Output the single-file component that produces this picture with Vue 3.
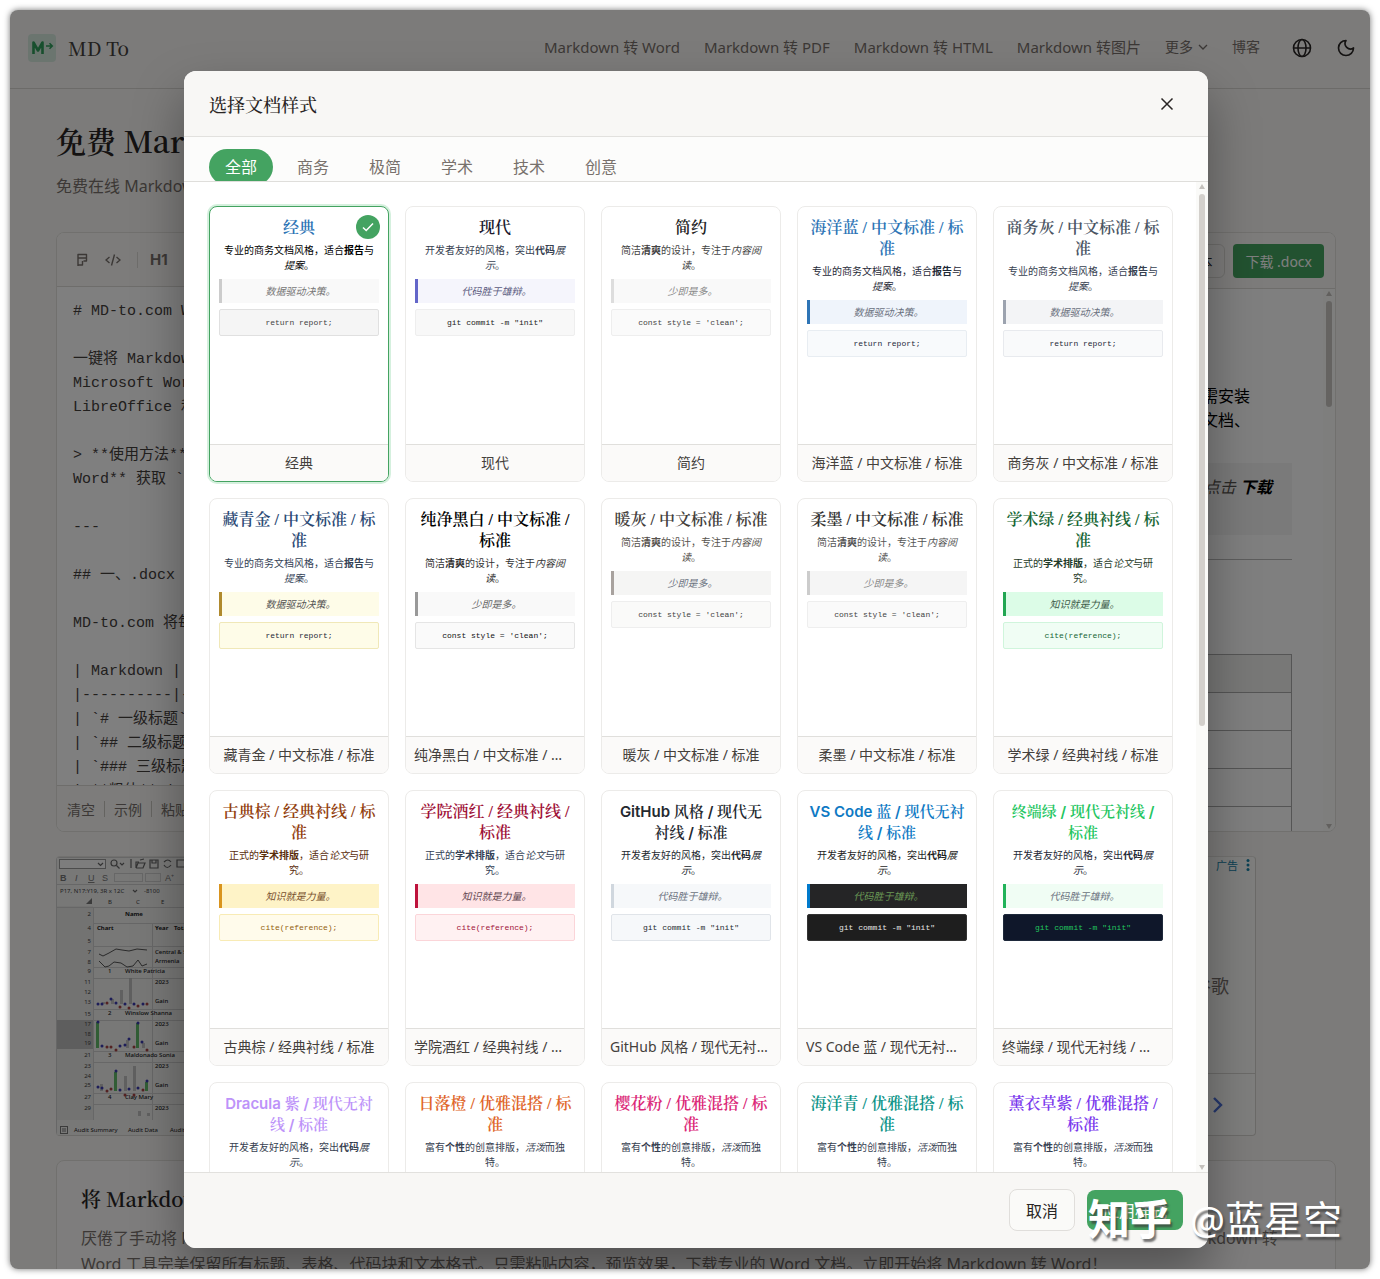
<script setup>
import { ref } from 'vue'

const navLinks = ['Markdown 转 Word', 'Markdown 转 PDF', 'Markdown 转 HTML', 'Markdown 转图片']
const tabs = ['全部', '商务', '极简', '学术', '技术', '创意']
const activeTab = ref('全部')
const selected = ref('经典')

const markdown = ref(`# MD-to.com Word

一键将 Markdown 转换为
Microsoft Word、WPS 和
LibreOffice 和更多

> **使用方法**：点击下载
Word** 获取 \`.docx\`

---

## 一、.docx 转换

MD-to.com 将每个元素

| Markdown | Word |
|----------|------|
| \`# 一级标题\` | H1 |
| \`## 二级标题\` | H2 |
| \`### 三级标题\` | H3 |
| **粗体** | 粗体 |`)

const samples = {
  biz: { desc: [['专业的商务文档风格，适合'], ['报告', 'b'], ['与'], ['提案', 'i'], ['。']], quote: '数据驱动决策。', code: 'return report;' },
  dev: { desc: [['开发者友好的风格，突出'], ['代码', 'b'], ['展示', 'i'], ['。']], quote: '代码胜于雄辩。', code: 'git commit -m "init"' },
  min: { desc: [['简洁'], ['清爽', 'b'], ['的设计，专注于'], ['内容阅读', 'i'], ['。']], quote: '少即是多。', code: "const style = 'clean';" },
  aca: { desc: [['正式的'], ['学术排版', 'b'], ['，适合'], ['论文', 'i'], ['与研究。']], quote: '知识就是力量。', code: 'cite(reference);' },
  art: { desc: [['富有'], ['个性', 'b'], ['的创意排版，'], ['活泼', 'i'], ['而独特。']], quote: '创意点亮世界。', code: 'create(magic);' }
}

const styles = [
  { id: 'classic', kind: 'biz', name: '经典', lines: ['经典'] },
  { id: 'modern', kind: 'dev', name: '现代', lines: ['现代'] },
  { id: 'simple', kind: 'min', name: '简约', lines: ['简约'] },
  { id: 'ocean', kind: 'biz', name: '海洋蓝 / 中文标准 / 标准', lines: ['海洋蓝 / 中文标准 / 标', '准'] },
  { id: 'gray', kind: 'biz', name: '商务灰 / 中文标准 / 标准', lines: ['商务灰 / 中文标准 / 标', '准'] },
  { id: 'navy', kind: 'biz', name: '藏青金 / 中文标准 / 标准', lines: ['藏青金 / 中文标准 / 标', '准'] },
  { id: 'mono', kind: 'min', name: '纯净黑白 / 中文标准 / 标准', lines: ['纯净黑白 / 中文标准 /', '标准'] },
  { id: 'warm', kind: 'min', name: '暖灰 / 中文标准 / 标准', lines: ['暖灰 / 中文标准 / 标准'] },
  { id: 'ink', kind: 'min', name: '柔墨 / 中文标准 / 标准', lines: ['柔墨 / 中文标准 / 标准'] },
  { id: 'green', kind: 'aca', name: '学术绿 / 经典衬线 / 标准', lines: ['学术绿 / 经典衬线 / 标', '准'] },
  { id: 'brown', kind: 'aca', name: '古典棕 / 经典衬线 / 标准', lines: ['古典棕 / 经典衬线 / 标', '准'] },
  { id: 'wine', kind: 'aca', name: '学院酒红 / 经典衬线 / 标准', lines: ['学院酒红 / 经典衬线 /', '标准'] },
  { id: 'github', kind: 'dev', name: 'GitHub 风格 / 现代无衬线 / 标准', lines: ['GitHub 风格 / 现代无', '衬线 / 标准'], sans: true },
  { id: 'vscode', kind: 'dev', name: 'VS Code 蓝 / 现代无衬线 / 标准', lines: ['VS Code 蓝 / 现代无衬', '线 / 标准'], sans: true },
  { id: 'terminal', kind: 'dev', name: '终端绿 / 现代无衬线 / 标准', lines: ['终端绿 / 现代无衬线 /', '标准'], sans: true },
  { id: 'dracula', kind: 'dev', name: 'Dracula 紫 / 现代无衬线 / 标准', lines: ['Dracula 紫 / 现代无衬', '线 / 标准'], sans: true },
  { id: 'sunset', kind: 'art', name: '日落橙 / 优雅混搭 / 标准', lines: ['日落橙 / 优雅混搭 / 标', '准'] },
  { id: 'sakura', kind: 'art', name: '樱花粉 / 优雅混搭 / 标准', lines: ['樱花粉 / 优雅混搭 / 标', '准'] },
  { id: 'teal', kind: 'art', name: '海洋青 / 优雅混搭 / 标准', lines: ['海洋青 / 优雅混搭 / 标', '准'] },
  { id: 'lavender', kind: 'art', name: '薰衣草紫 / 优雅混搭 / 标准', lines: ['薰衣草紫 / 优雅混搭 /', '标准'] }
]

const sheetRows = [
  [57, '2'], [71, '4'], [84, '5'], [95, '7'], [105, '8'], [114, '9'], [125, '11'], [135, '12'], [145, '13'],
  [157, '15'], [167, '17'], [177, '18'], [186, '19'], [198, '21'], [209, '23'], [219, '24'], [228, '25'], [240, '27'], [251, '29']
]
const sheetText = [
  [69, 59, 'Name', 1], [41, 73, 'Chart', 1], [99, 73, 'Year', 1], [118, 73, 'Total', 1],
  [99, 97, 'Central & S', 0], [99, 106, 'Armenia', 0], [52, 116, '1', 0], [69, 116, 'White Patricia', 0],
  [99, 127, '2023', 0], [99, 146, 'Gain', 0], [52, 158, '2', 0], [69, 158, 'Winslow Shanna', 0],
  [99, 169, '2023', 0], [99, 188, 'Gain', 0], [52, 200, '3', 0], [69, 200, 'Maldonado Sonia', 0],
  [99, 211, '2023', 0], [99, 230, 'Gain', 0], [52, 242, '4', 0], [69, 242, 'Clay Mary', 0], [99, 253, '2023', 0]
]
const sheetBars = [
  [64, 133, 14, '#b5b5b5'], [73, 121, 26, '#b5b5b5'], [46, 145, 2, '#b5b5b5'], [55, 142, 5, '#b5b5b5'],
  [40, 165, 26, '#3fae49'], [80, 166, 25, '#3fae49'], [70, 183, 8, '#b5b5b5'], [86, 186, 5, '#b5b5b5'],
  [58, 215, 19, '#3fae49'], [68, 219, 15, '#b5b5b5'], [77, 209, 25, '#b5b5b5'], [44, 227, 7, '#b5b5b5'], [89, 225, 9, '#3fae49'],
  [82, 254, 5, '#b5b5b5'], [91, 256, 3, '#b5b5b5']
]
const sheetDots = [
  [42, 147, 'b'], [46, 147, 'b'], [51, 146, 'r'], [55, 142, 'b'], [60, 146, 'b'], [64, 150, 'r'], [69, 147, 'b'], [73, 151, 'r'], [78, 147, 'b'], [82, 149, 'r'], [87, 147, 'b'], [91, 147, 'r'],
  [42, 165, 'b'], [46, 189, 'b'], [51, 190, 'r'], [55, 190, 'r'], [60, 193, 'r'], [64, 189, 'b'], [69, 188, 'b'], [73, 182, 'b'], [78, 190, 'r'], [82, 166, 'b'], [86, 185, 'b'], [91, 193, 'r'],
  [42, 230, 'b'], [46, 231, 'b'], [51, 234, 'r'], [55, 232, 'r'], [60, 214, 'b'], [64, 233, 'b'], [69, 238, 'r'], [73, 232, 'b'], [78, 238, 'r'], [82, 231, 'b'], [87, 233, 'r'], [91, 224, 'b']
]
</script>

<template>
  <div class="stage">
    <div class="window">
      <div class="page">
        <header class="site-header">
          <a class="brand" href="#">
            <svg width="28" height="28" viewBox="0 0 28 28" aria-hidden="true">
              <rect width="28" height="28" rx="4" fill="#d6eadf" />
              <path d="M5.500 20V8.500l4.500 8 4.500-8V20" fill="none" stroke="#2f9e5b" stroke-width="2.600" stroke-linejoin="round" />
              <path d="M18 12h6M21.500 9.200l2.800 2.800-2.800 2.800" fill="none" stroke="#2f9e5b" stroke-width="1.500" />
            </svg>
            <span>MD To</span>
          </a>
          <nav class="site-nav">
            <a v-for="l in navLinks" :key="l" href="#">{{ l }}</a>
            <a href="#" class="more">更多
              <svg width="10" height="10" viewBox="0 0 10 10" fill="none" stroke="currentColor" stroke-width="1.300"><path d="M1 3l4 4 4-4" /></svg>
            </a>
            <a href="#" class="blog">博客</a>
          </nav>
          <div class="site-tools">
            <button type="button" aria-label="语言">
              <svg width="20" height="20" viewBox="0 0 20 20" fill="none" stroke="currentColor" stroke-width="1.600"><circle cx="10" cy="10" r="8.500" /><ellipse cx="10" cy="10" rx="4" ry="8.500" /><path d="M1.500 10h17" /></svg>
            </button>
            <button type="button" aria-label="深色模式">
              <svg width="20" height="20" viewBox="0 0 24 24" fill="none" stroke="currentColor" stroke-width="2" stroke-linejoin="round"><path d="M12 3a6.500 6.500 0 0 0 9 9 9 9 0 1 1-9-9z" /></svg>
            </button>
          </div>
        </header>

        <main class="content">
          <h1>免费 Markdown 转 Word 转换器</h1>
          <p class="lead">免费在线 Markdown 转 Word 工具</p>

          <div class="workspace">
            <section class="pane">
              <div class="pane-bar">
                <button type="button" class="tool" aria-label="格式">
                  <svg width="14" height="14" viewBox="0 0 14 14" fill="none" stroke="currentColor" stroke-width="1.400" stroke-linejoin="round"><path d="M3 13V1.500h8.500v6.500H8.500M3 5h8.500M3 12h4.500V8" /></svg>
                </button>
                <button type="button" class="tool" aria-label="代码">
                  <svg width="16" height="14" viewBox="0 0 16 14" fill="none" stroke="currentColor" stroke-width="1.400"><path d="M4.500 4L1 7l3.500 3M11.500 4L15 7l-3.500 3M9.500 1.500l-3 11" /></svg>
                </button>
                <i class="rule"></i>
                <button type="button" class="tool h">H1</button>
              </div>
              <textarea v-model="markdown" aria-label="Markdown" wrap="off" spellcheck="false"></textarea>
              <div class="pane-foot">
                <button type="button">清空</button><i></i><button type="button">示例</button><i></i><button type="button">粘贴</button>
              </div>
            </section>
            <section class="pane">
              <div class="pane-bar right">
                <button type="button" class="copy">复制文本</button>
                <button type="button" class="download">下载 .docx</button>
              </div>
              <div class="preview-wrap">
                <div class="doc">
                  <h2>MD-to.com Word</h2>
                  <p>一键转换，无需安装<br />导出文档、</p>
                  <blockquote>粘贴内容后点击 <b>下载</b><br />&nbsp;</blockquote>
                  <hr />
                  <h3>一、.docx 转换</h3>
                  <table>
                    <thead><tr><th>Markdown</th><th></th></tr></thead>
                    <tbody>
                      <tr><td># 一级标题</td><td></td></tr>
                      <tr><td>## 二级标题</td><td></td></tr>
                      <tr><td>### 三级标题</td><td></td></tr>
                      <tr><td>粗体</td><td></td></tr>
                    </tbody>
                  </table>
                </div>
                <div class="scroll">
                  <i class="up"></i><b class="short"></b><i class="down"></i>
                </div>
              </div>
            </section>
          </div>

          <aside class="ad">
            <svg class="sheet" width="200" height="280" viewBox="0 0 200 280" aria-hidden="true">
              <rect width="200" height="280" fill="#f0f0ef" />
              <rect y="49" width="37" height="214" fill="#e6e6e5" />
              <rect y="163" width="37" height="29" fill="#bdbdbd" />
              <g stroke="#cfcfcf" fill="none">
                <path d="M0 .500h200M.500 0v280M0 27.500h200M0 50.500h200M37.500 50v213M96.500 66v197M37 66.500h163M37 89.500h163M37 110.500h163M37 121.500h163M37 152.500h163M37 163.500h163M37 194.500h163M37 205.500h163M37 236.500h163M37 247.500h163M0 279.500h200" />
                <rect x="3.500" y="2.500" width="46" height="9" fill="#fafafa" stroke="#999" />
                <rect x="58.500" y="16.500" width="28" height="8" /><rect x="89.500" y="16.500" width="15" height="8" />
              </g>
              <g stroke="#666" fill="none" stroke-width="1.200">
                <path d="M42 6l2.500 2.500L47 6M64 6l2 2 2-2M75 2v9M77 33l2 2 2-2" />
                <circle cx="58" cy="6" r="3" /><path d="M60.500 8.500l3 3M80 11V5h3M80 11h7l2-5h-7l-2 5M84 3l4-1M94 3h8v8h-8zM96 3v3h4V3M108 5q4-4 7 0M115 8q-4 5-7 0M121 3h8v7h-8z" />
              </g>
              <g font-family="Liberation Sans, sans-serif" font-size="9" fill="#777">
                <text x="4" y="24" font-weight="bold">B</text><text x="19" y="24" font-style="italic">I</text><text x="32" y="24" text-decoration="underline">U</text><text x="46" y="24">S</text><text x="109" y="24">A⁺</text>
              </g>
              <g font-family="Noto Sans, sans-serif" font-size="6" fill="#444">
                <text x="4" y="36">P17, N17:Y19, 3R x 12C</text><text x="88" y="36">-8100</text>
                <text x="52" y="47">B</text><text x="80" y="47">C</text><text x="105" y="47">E</text>
                <text v-for="r in sheetRows" :key="r[0]" x="35" :y="r[0] + 2" text-anchor="end">{{ r[1] }}</text>
                <text v-for="t in sheetText" :key="t[0] + '-' + t[1]" :x="t[0]" :y="t[1]" :font-weight="t[3] ? 700 : 500" fill="#222">{{ t[2] }}</text>
                <text x="18" y="275" fill="#222">Audit Summary</text><text x="72" y="275" fill="#222">Audit Data</text><text x="114" y="275" fill="#222">Audit</text>
              </g>
              <path d="M36 41v6h-6z" fill="#777" />
              <path d="M43 97l4 2 6-3 7-4 6 1 7 1 8-2 10 1M43 104l6 6 4-1 5-4 7 1 6 4 6-1 5-6 4 6 5-2" fill="none" stroke="#555" />
              <rect v-for="(b, i) in sheetBars" :key="'b' + i" :x="b[0]" :y="b[1]" width="3" :height="b[2]" :fill="b[3]" opacity=".8" />
              <circle v-for="(d, i) in sheetDots" :key="'d' + i" :cx="d[0]" :cy="d[1]" r="1.500" :fill="d[2] === 'b' ? '#3b3bb0' : '#a84444'" />
              <rect x="4.500" y="269.500" width="7" height="7" fill="none" stroke="#777" /><path d="M6 272h4M6 274h4" stroke="#777" />
            </svg>
            <div class="ad-side">
              <div class="ad-top">广告 <svg width="4" height="12" viewBox="0 0 4 12" fill="currentColor"><circle cx="2" cy="1.500" r="1.500" /><circle cx="2" cy="6" r="1.500" /><circle cx="2" cy="10.500" r="1.500" /></svg></div>
              <div class="ad-mid">谷歌</div>
              <div class="ad-bot"><svg width="12" height="16" viewBox="0 0 12 16" fill="none" stroke="#4a6fd8" stroke-width="2.400"><path d="M2 1l7 7-7 7" /></svg></div>
            </div>
          </aside>

          <section class="about">
            <h2>将 Markdown 转换为 Word</h2>
            <p class="spread"><span>厌倦了手动将 Markdown 复制到文档？</span><span>免费的 Markdown 转</span></p>
            <p>Word 工具完美保留所有标题、表格、代码块和文本格式。只需粘贴内容，预览效果，下载专业的 Word 文档。立即开始将 Markdown 转 Word！</p>
          </section>
        </main>
      </div>

      <div class="overlay">
        <div class="modal" role="dialog" aria-modal="true" aria-labelledby="dlg-title">
          <header class="modal-head">
            <h2 id="dlg-title">选择文档样式</h2>
            <button type="button" aria-label="关闭">
              <svg width="16" height="16" viewBox="0 0 16 16" fill="none" stroke="currentColor" stroke-width="1.500"><path d="M2.500 2.500l11 11M13.500 2.500l-11 11" /></svg>
            </button>
          </header>
          <div class="tabs">
            <button v-for="t in tabs" :key="t" type="button" :class="{ on: t === activeTab }" @click="activeTab = t">{{ t }}</button>
          </div>
          <div class="modal-body">
            <div class="grid">
              <button
                v-for="s in styles" :key="s.id" type="button"
                class="card" :class="[s.id, { sel: s.name === selected, sans: s.sans }]"
                @click="selected = s.name"
              >
                <span class="sample">
                  <span class="title"><span v-for="l in s.lines" :key="l">{{ l }}</span></span>
                  <span class="desc"><span v-for="(p, i) in samples[s.kind].desc" :key="i" :class="p[1]">{{ p[0] }}</span></span>
                  <span class="quote">{{ samples[s.kind].quote }}</span>
                  <code>{{ samples[s.kind].code }}</code>
                </span>
                <span class="name"><span>{{ s.name }}</span></span>
                <span v-if="s.name === selected" class="check">
                  <svg width="14" height="14" viewBox="0 0 14 14" fill="none" stroke="#fff" stroke-width="1.500"><path d="M2 7.500l3.200 3L12 3.500" /></svg>
                </span>
              </button>
            </div>
            <div class="scroll light">
              <i class="up"></i><b></b><i class="down"></i>
            </div>
          </div>
          <footer class="modal-foot">
            <button type="button" class="cancel">取消</button>
            <button type="button" class="apply">应用样式</button>
          </footer>
        </div>
      </div>
    </div>
    <div class="mark"><b>知乎</b><span>@蓝星空</span></div>
  </div>
</template>

<style>
body { margin: 0; background: #fff; }
</style>

<style scoped>
* { box-sizing: border-box; }
button { font: inherit; color: inherit; background: none; border: 0; padding: 0; cursor: pointer; }
h1, h2, h3, p, blockquote { margin: 0; }
a { color: inherit; text-decoration: none; }
svg { flex: none; }

.stage {
  --serif: "Liberation Serif", "Noto Serif CJK SC", "Noto Sans CJK SC", serif;
  --display: "Noto Serif CJK SC", "Liberation Serif", serif;
  --sans: "Noto Sans", "Noto Sans CJK SC", sans-serif;
  position: relative;
  height: 100vh;
  padding: 10px;
  font-family: var(--sans);
  color: #44403c;
}
.window {
  position: relative;
  height: 100%;
  overflow: hidden;
  border-radius: 8px;
  background: #f8f7f5;
  box-shadow: 0 0 6px rgba(0, 0, 0, .55);
}
.page { height: 100%; overflow: hidden; }

.site-header {
  display: flex;
  align-items: center;
  height: 79px;
  padding: 0 14px 2px 18px;
  border-bottom: 1px solid #d8d6d2;
}
.brand { display: flex; align-items: center; gap: 12px; font: 500 19px/28px var(--display); color: #44403c; }
.site-nav { display: flex; gap: 24px; margin-left: auto; padding-bottom: 2px; font-size: 15px; color: #78716c; }
.more { display: flex; align-items: center; gap: 5px; }
.more, .blog { font-size: 14px; line-height: 22px; }
.site-tools { display: flex; gap: 24px; margin-left: 32px; color: #292524; }
.site-tools button { display: flex; }

.content { padding: 31px 34px 0 46px; }
.content h1 { font: 600 30px/40px var(--display); color: #292524; }
.lead { margin-top: 14px; font-size: 16px; line-height: 24px; color: #78716c; }

.workspace { display: flex; gap: 16px; height: 600px; margin-top: 34px; }
.pane {
  flex: 1;
  display: flex;
  flex-direction: column;
  overflow: hidden;
  background: #fff;
  border: 1px solid #e2e0dc;
  border-radius: 8px;
}
.pane-bar {
  display: flex;
  align-items: center;
  gap: 16px;
  height: 54px;
  padding: 0 18px;
  background: #faf9f7;
  border-bottom: 1px solid #dddbd7;
  color: #78716c;
}
.pane-bar.right { height: 56px; justify-content: flex-end; gap: 8px; padding: 0 11px; }
.tool { display: flex; }
.tool.h { font: bold 15px/20px "Inter", sans-serif; }
.rule { width: 1px; height: 16px; background: #dddbd7; }
.rule + .tool { margin-left: -4px; }
.copy { height: 34px; padding: 0 12px; border: 1px solid #dddbd7; border-radius: 6px; font-size: 14px; color: #292524; }
.download { height: 34px; padding: 0 12px; border-radius: 4px; background: #44a460; color: #fff; font-size: 14px; }
textarea {
  flex: 1;
  padding: 13px 16px 0;
  border: 0;
  resize: none;
  overflow: hidden;
  outline: 0;
  background: #fff;
  font: 15px/24px "Liberation Mono", "Noto Sans CJK SC", monospace;
  color: #44403c;
}
.pane-foot {
  display: flex;
  align-items: center;
  gap: 9px;
  height: 46px;
  padding: 0 10px;
  background: #faf9f7;
  border-top: 1px solid #dddbd7;
  font-size: 14px;
  color: #78716c;
}
.pane-foot i { width: 1px; height: 16px; background: #c9c6c1; }

.preview-wrap { flex: 1; display: flex; min-height: 0; }
.doc { flex: 1; padding: 24px 31px 0 24px; overflow: hidden; font-size: 16px; line-height: 24px; color: #000; }
.doc h2 { margin-bottom: 31px; font: bold 28px/40px var(--sans); }
.doc p { padding-right: 42px; text-align: right; }
.doc blockquote { margin: 31px 0 24px; padding: 12px 20px; background: #f5f5f4; text-align: right; font-style: italic; color: #57534e; }
.doc blockquote b { color: #000; }
.doc hr { margin: 0; border: 0; border-top: 1px solid #bbb; }
.doc h3 { margin: 31px 0; font: bold 24px/32px var(--sans); }
.doc table { width: 100%; border-collapse: collapse; }
.doc th, .doc td { height: 38px; padding: 0 12px; border: 1px solid #aaa; text-align: left; }
.doc th { background: #f0f0ee; }

.scroll { display: flex; flex-direction: column; align-items: center; width: 12px; padding: 2px 0; background: #fcfcfb; }
.scroll i { border: 3px solid transparent; }
.scroll .up { border-top: 0; border-bottom: 5px solid #c4c1bd; margin-bottom: 5px; }
.scroll .down { border-bottom: 0; border-top: 5px solid #c4c1bd; margin-top: auto; }
.scroll b { width: 6px; height: 54%; border-radius: 3px; background: #d3d0cc; }
.scroll b.short { height: 106px; background: #cac7c3; }

.ad { display: flex; justify-content: space-between; max-width: 1200px; height: 280px; margin-top: 24px; border-radius: 4px; overflow: hidden; background: #fcfcfb; border-right: 1px solid #d6d4d0; border-bottom: 1px solid #d6d4d0; border-top: 1px solid #e4e2de; }
.ad-side { display: flex; flex-direction: column; width: 300px; }
.ad-top { display: flex; align-items: center; justify-content: flex-end; gap: 8px; height: 16px; padding-right: 5px; font-size: 11px; color: #1583a8; }
.ad-mid { flex: 1; display: flex; align-items: center; justify-content: flex-end; padding: 24px 26px 0 0; font-size: 18px; color: #78716c; }
.ad-bot { display: flex; align-items: center; justify-content: flex-end; height: 62px; padding-right: 31px; border-top: 1px solid #d6d4d0; }

.about { margin-top: 24px; padding: 24px; height: 300px; border: 1px solid #e2e0dc; border-radius: 8px; background: #fcfbfa; font-size: 16px; line-height: 26px; color: #78716c; }
.about h2 { margin-bottom: 12px; font: 600 20px/28px var(--display); color: #292524; }
.about p { white-space: nowrap; }
.spread { display: flex; justify-content: space-between; padding-right: 33px; }

.overlay {
  position: absolute;
  inset: 0;
  display: flex;
  justify-content: center;
  padding: 61px 0 21px 12px;
  background: rgba(0, 0, 0, .5);
}
.modal {
  display: flex;
  flex-direction: column;
  width: 100%;
  max-width: 1024px;
  overflow: hidden;
  border-radius: 12px;
  background: #fff;
  box-shadow: 0 25px 50px rgba(0, 0, 0, .35);
}
.modal-head {
  display: flex;
  align-items: center;
  justify-content: space-between;
  height: 66px;
  padding: 0 33px 0 25px;
  background: #f8f7f5;
  border-bottom: 1px solid #e2e1de;
}
.modal-head h2 { padding-top: 4px; font: 500 18px/28px var(--serif); color: #292524; }
.modal-head button { display: flex; color: #292524; }
.tabs { display: flex; align-items: flex-start; gap: 8px; height: 45px; padding: 12px 25px 0; overflow: hidden; background: #fcfcfb; border-bottom: 1px solid #dfdedb; }
.tabs button { flex: none; height: 36px; padding: 0 16px; border-radius: 18px; font-size: 16px; line-height: 36px; color: #78716c; }
.tabs .on { background: #44a361; color: #fff; }
.modal-body { flex: 1; display: flex; min-height: 0; }
.grid { flex: 1; display: grid; grid-template-columns: repeat(5, 1fr); grid-auto-rows: 276px; gap: 16px; align-content: start; padding: 24px 23px 0 25px; overflow: hidden; }
.scroll.light { background: #fafaf8; }

.card {
  --t: #1f2937; --d: #374151; --q: #6b7280; --qb: #f9f9f9; --ql: #ddd; --c: #444; --cb: #fafafa; --cl: #eee;
  position: relative;
  display: flex;
  flex-direction: column;
  min-width: 0;
  overflow: hidden;
  border: 1px solid #ecebe9;
  border-radius: 8px;
  background: #fff;
  text-align: center;
}
.card.sel { border-color: #44a361; box-shadow: 0 0 0 2px #d5f0de; }
.sample { flex: 1; display: flex; flex-direction: column; min-height: 0; padding: 10px 9px; }
.title { font: 600 16px/21px var(--serif); color: var(--t); white-space: nowrap; }
.title span { display: block; }
.sans .title { font: 600 15px/21px "Inter", "Noto Serif CJK SC", sans-serif; }
.desc { margin: 5px 0 6px; padding: 0 3px; font-size: 10px; line-height: 15px; color: var(--d); }
.b { font-weight: 700; }
.i { font-style: italic; }
.quote { height: 24px; border-left: 3px solid var(--ql); background: var(--qb); font-size: 10px; line-height: 24px; font-style: italic; color: var(--q); }
code { height: 27px; margin-top: 6px; border: 1px solid var(--cl); border-radius: 2px; background: var(--cb); font: 8px/25px "Liberation Mono", monospace; color: var(--c); }
.name { display: block; height: 37px; padding: 0 8px; border-top: 1px solid #e0dfdc; background: #fbfaf9; font-size: 14px; line-height: 36px; color: #44403c; }
.name span { display: block; overflow: hidden; text-overflow: ellipsis; white-space: nowrap; }
.check { position: absolute; top: 8px; right: 8px; display: flex; align-items: center; justify-content: center; width: 24px; height: 24px; border-radius: 50%; background: #44a361; }

.classic { --t: #2e74b5; --d: #000; --q: #777; --ql: #ccc; --cb: #f5f5f5; --cl: #e0e0e0; }
.modern { --t: #1a1a2e; --q: #5b5b80; --qb: #f5f5fc; --ql: #6366c9; --c: #222; --cb: #f8f8f8; }
.simple { --t: #222; --q: #888; --d: #444; }
.ocean { --t: #2e75b6; --d: #1f2937; --qb: #eff4fb; --ql: #2e75b6; --c: #1e293b; --cb: #f8fafc; --cl: #e8edf2; }
.gray { --t: #4b5563; --qb: #f3f4f6; --ql: #9ca3af; --c: #1f2937; --cb: #f9fafb; --cl: #e8eaee; }
.navy { --t: #2c4a75; --d: #334155; --q: #555; --qb: #fefce8; --ql: #b08a2e; --c: #1f2937; --cb: #fefce8; --cl: #f0e8b8; }
.mono { --t: #000; --d: #333; --q: #666; --ql: #999; --c: #111; --cl: #e5e5e5; }
.warm { --t: #44403c; --d: #57534e; --qb: #f5f5f4; --ql: #a8a29e; --cb: #fafaf9; }
.ink { --t: #333; --d: #555; --q: #888; --qb: #f5f5f5; --ql: #ccc; }
.green { --t: #166534; --d: #1f3b2a; --q: #3c5a48; --qb: #dcfce7; --ql: #22a652; --c: #166534; --cb: #f0fdf4; --cl: #d0f5dc; }
.brown { --t: #92400e; --d: #5a2d0c; --q: #78502c; --qb: #fef3c7; --ql: #d9941e; --c: #92600e; --cb: #fffbeb; --cl: #f8ebb5; }
.wine { --t: #9f1239; --d: #334155; --q: #5f4650; --qb: #ffe4e6; --ql: #be123c; --c: #9f1239; --cb: #fff1f2; --cl: #fbd5d9; }
.github { --t: #24292f; --d: #24292f; --qb: #f6f8fa; --ql: #d0d7de; --c: #24292f; --cb: #f6f8fa; --cl: #e0e4e9; }
.vscode { --t: #0f7ac4; --d: #1e1e1e; --q: #6a9955; --qb: #252526; --ql: #007acc; --c: #e4e4e4; --cb: #1e1e1e; --cl: #333; }
.terminal { --t: #22c55e; --d: #1f2937; --qb: #f0fdf4; --ql: #22b35a; --c: #22c55e; --cb: #0f172a; --cl: #1e293b; }
.dracula { --t: #bd93f9; --qb: #f5f0ff; --ql: #bd93f9; --cb: #282a36; --c: #f8f8f2; }
.sunset { --t: #e0662a; }
.sakura { --t: #db2777; }
.teal { --t: #0d9488; }
.lavender { --t: #7c3aed; }

.modal-foot { display: flex; align-items: center; justify-content: flex-end; gap: 12px; height: 76px; padding: 0 25px 2px; background: #f8f7f5; border-top: 1px solid #e2e1de; font-size: 16px; }
.cancel { height: 42px; padding: 0 16px; border: 1px solid #e0dedb; border-radius: 8px; background: #fafaf8; color: #292524; }
.apply { height: 40px; padding: 0 16px; border-radius: 8px; background: #44a361; color: #fff; }

.mark { position: absolute; right: 38px; bottom: 37px; display: flex; gap: 18px; font-size: 39px; line-height: 46px; color: #fff; text-shadow: 2px 3px 2px rgba(60, 60, 60, .7); pointer-events: none; }
.mark b { font-size: 42px; }
</style>
